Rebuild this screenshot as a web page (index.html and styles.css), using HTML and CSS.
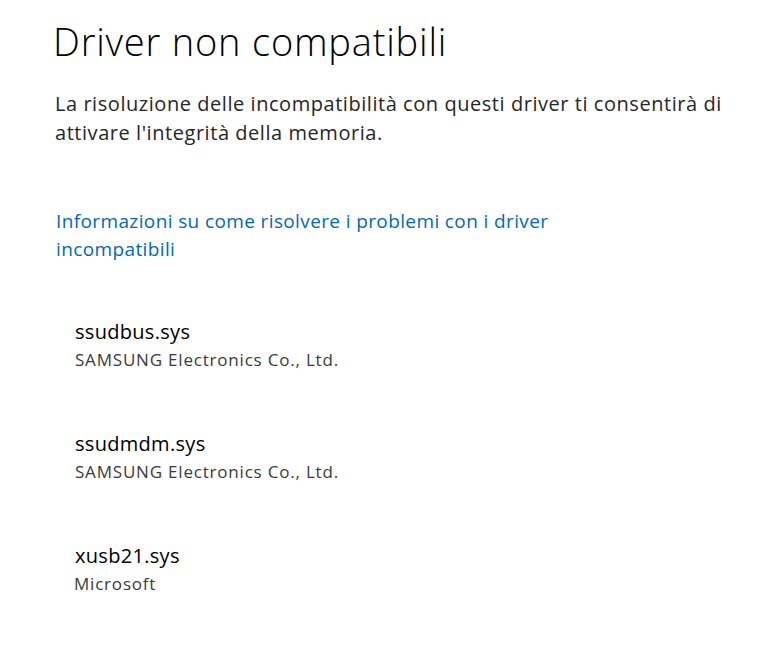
FILE: index.html
```html
<!DOCTYPE html>
<html lang="it">
<head>
<meta charset="utf-8">
<title>Driver non compatibili</title>
<link rel="stylesheet" href="styles.css">
</head>
<body>
<main class="page">
  <h1 class="title">Driver non compatibili</h1>
  <p class="desc">La risoluzione delle incompatibilità con questi driver ti consentirà di attivare l'integrità della memoria.</p>
  <a class="link" href="#">Informazioni su come risolvere i problemi con i driver incompatibili</a>
  <ul class="drivers">
    <li class="driver">
      <span class="driver-name">ssudbus.sys</span>
      <span class="driver-vendor">SAMSUNG Electronics Co., Ltd.</span>
    </li>
    <li class="driver">
      <span class="driver-name">ssudmdm.sys</span>
      <span class="driver-vendor">SAMSUNG Electronics Co., Ltd.</span>
    </li>
    <li class="driver">
      <span class="driver-name">xusb21.sys</span>
      <span class="driver-vendor vendor-ms">Microsoft</span>
    </li>
  </ul>
</main>
</body>
</html>
```

FILE: styles.css
```css
html, body {
  margin: 0;
  padding: 0;
  background: #ffffff;
}
body {
  font-family: "Open Sans", "Noto Sans", sans-serif;
  color: #1a1a1a;
}
.page {
  padding: 13px 40px 0 53px;
  display: flex;
  flex-direction: column;
  align-items: flex-start;
}
.title {
  margin: 0;
  font-size: 38px;
  font-weight: 300;
  line-height: 56px;
  letter-spacing: 0.8px;
  color: #000;
}
.desc {
  margin: 20px 0 0 2px;
  font-size: 20px;
  line-height: 29px;
  letter-spacing: 0.55px;
  color: #262626;
  max-width: 680px;
}
.link {
  margin: 60px 0 0 3px;
  font-size: 19px;
  line-height: 28px;
  letter-spacing: 0.38px;
  color: #0067c0;
  text-decoration: none;
  max-width: 530px;
}
.drivers {
  list-style: none;
  margin: 55px 0 0 0;
  padding: 0 0 0 22px;
  display: flex;
  flex-direction: column;
  gap: 56px;
}
.driver {
  display: flex;
  flex-direction: column;
}
.driver-name {
  font-size: 20px;
  line-height: 28px;
  letter-spacing: 0.3px;
  color: #000;
}
.driver-vendor {
  font-size: 17px;
  line-height: 28px;
  letter-spacing: 0.8px;
  color: #3a3a3a;
}
.vendor-ms {
  margin-left: -1px;
}
```
